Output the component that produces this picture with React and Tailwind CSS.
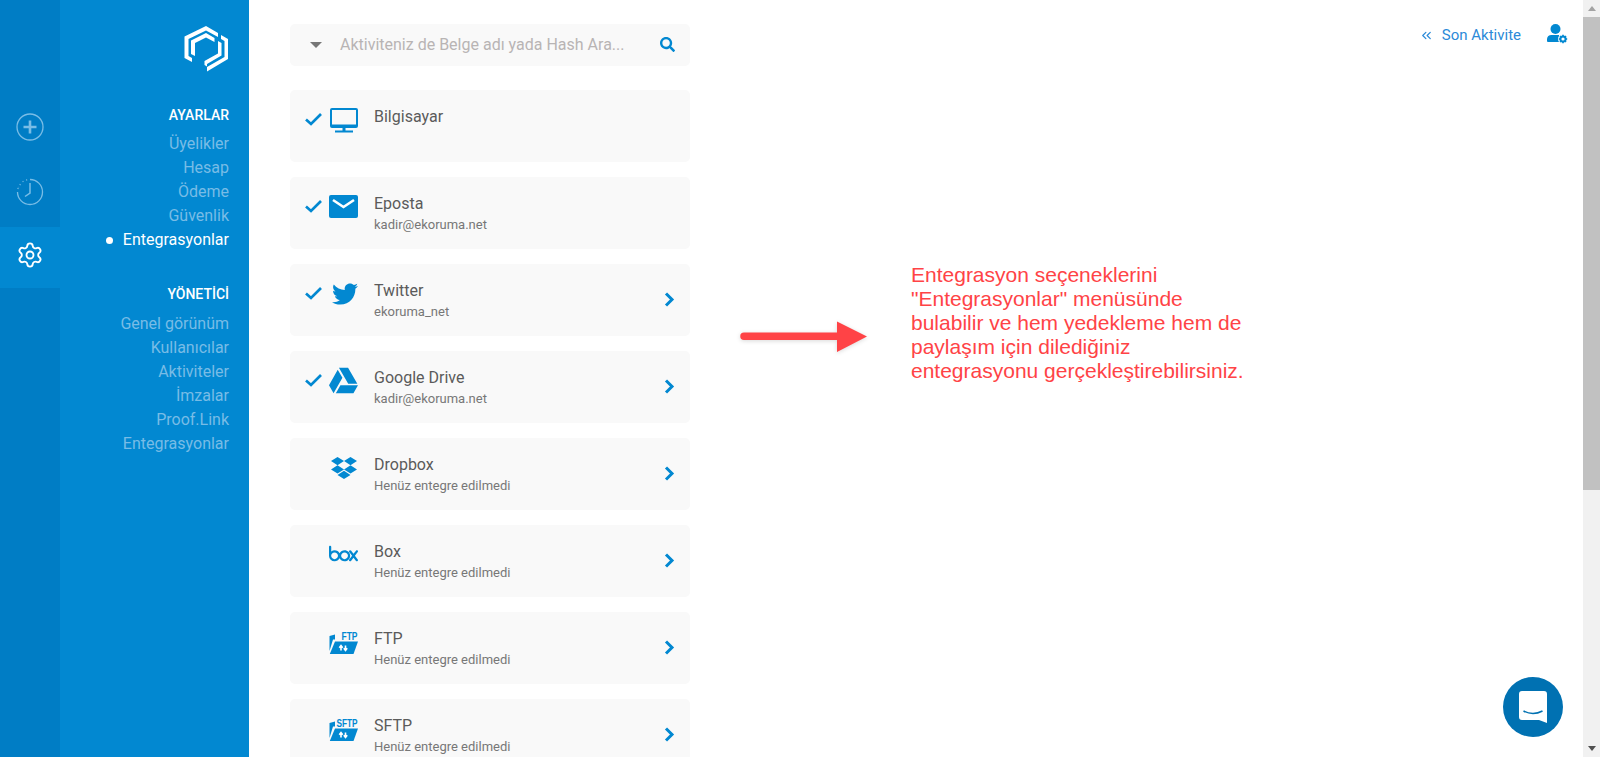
import { Settings, ChevronsLeft } from "lucide-react";
import { FaTwitter, FaDropbox, FaGoogleDrive, FaSearch } from "react-icons/fa";
import { SiBox } from "react-icons/si";

const settingsMenu = ["Üyelikler", "Hesap", "Ödeme", "Güvenlik"];
const adminMenu = ["Genel görünüm", "Kullanıcılar", "Aktiviteler", "İmzalar", "Proof.Link", "Entegrasyonlar"];

function Logo() {
  return (
    <svg width="46" height="46" viewBox="0 0 46 46" fill="#fff">
      <path d="M22 0 L34 7 L34 11 L22 4.5 L4.5 13 V30 L8 32 V36 L0.5 32 V10.5 Z" />
      <path d="M22 7 L30.5 12 V16 L22 11.5 L11 17 V30 L7 28 V14.5 Z" />
      <path d="M37 9 L44 13 V33 L23 45.5 V41 L40.5 31 V15 L37 13 Z" />
      <path d="M34 15 L37.5 17 V29.5 L23 38 V40.5 L20.5 39 V35 L34 27.5 Z" />
    </svg>
  );
}

function ClockIcon() {
  return (
    <svg width="28" height="28" viewBox="0 0 28 28" fill="none" stroke="#79bde6" strokeWidth="1.3">
      <path d="M14 1.5 A12.5 12.5 0 1 1 1.5 14" />
      <path d="M1.8 11 L2.6 9 M3.8 7 L5 5.4 M6.6 3.8 L8.2 2.8 M10.2 2 L11.8 1.7" strokeDasharray="1 1" />
      <path d="M14 5 V15 L9 18.5" strokeWidth="1.5" />
    </svg>
  );
}

function PlusIcon() {
  return (
    <svg width="28" height="28" viewBox="0 0 28 28" fill="none" stroke="#79bde6">
      <circle cx="14" cy="14" r="13" strokeWidth="1.3" />
      <path d="M14 7.5 V20.5 M7.5 14 H20.5" strokeWidth="2.6" />
    </svg>
  );
}

function MonitorIcon() {
  return (
    <svg width="28" height="25" viewBox="0 0 28 25" fill="#0288d1">
      <path fillRule="evenodd" d="M2 0 H26 A2 2 0 0 1 28 2 V18 A2 2 0 0 1 26 20 H2 A2 2 0 0 1 0 18 V2 A2 2 0 0 1 2 0 Z M2 2 V16.5 H26 V2 Z" />
      <rect x="12.5" y="20" width="3" height="3" />
      <rect x="5" y="22.5" width="18" height="2" />
    </svg>
  );
}

function MailIcon() {
  return (
    <svg width="29" height="23" viewBox="0 0 29 23">
      <rect width="29" height="23" rx="2" fill="#0288d1" />
      <path d="M4 5 L14.5 12 L25 5" fill="none" stroke="#fff" strokeWidth="2.6" />
    </svg>
  );
}

function CheckIcon() {
  return (
    <svg width="17" height="13" viewBox="0 0 17 13" fill="none" stroke="#0288d1" strokeWidth="2.7">
      <path d="M1 6.5 L6 11 L16 1" />
    </svg>
  );
}

function ChevronIcon() {
  return (
    <svg width="11" height="15" viewBox="0 0 11 15" fill="none" stroke="#0288d1" strokeWidth="3">
      <path d="M2 1.5 L8 7.5 L2 13.5" />
    </svg>
  );
}

function UserCogIcon() {
  return (
    <svg width="21" height="20" viewBox="0 0 21 20" className="ml-[26px] -mt-[2px]">
      <circle cx="8.5" cy="5" r="5" fill="#0288d1" />
      <path d="M0 17.5 V15 A4.5 4.5 0 0 1 4.5 11 H12 L12.5 17 V18 H1 Z" fill="#0288d1" />
      <circle cx="16" cy="15" r="5" fill="#fff" />
      <circle cx="16" cy="15" r="2.6" fill="none" stroke="#0288d1" strokeWidth="2" />
      <path d="M16 10.8 V12 M16 18 V19.2 M11.8 15 H13 M19 15 H20.2 M13 12 L13.9 12.9 M18.1 17.1 L19 18 M13 18 L13.9 17.1 M18.1 12.9 L19 12" stroke="#0288d1" strokeWidth="1.6" />
    </svg>
  );
}

function FolderIcon({ label }) {
  return (
    <svg width="29" height="24" viewBox="0 0 29 24" className="overflow-visible">
      <path d="M0.5 6 L6 4.5 V9.5 H4 L0.5 21 Z" fill="#0288d1" />
      <path d="M6 11.5 H29 L24.5 24 H0.8 Z" fill="#0288d1" />
      <text x="28.5" y="9.5" textAnchor="end" fontFamily="'Liberation Sans', sans-serif" fontWeight="700" fontSize="11" textLength={label.length > 3 ? 21 : 16} lengthAdjust="spacingAndGlyphs" fill="#0288d1">{label}</text>
      <path d="M12 20.5 V16 M10.3 17.8 L12 15.5 L13.7 17.8 M16.5 15.5 V20 M14.8 18.2 L16.5 20.5 L18.2 18.2" stroke="#fff" strokeWidth="1.6" fill="none" />
    </svg>
  );
}

function Card({ icon, title, sub, checked, arrow }) {
  return (
    <div className="h-[72px] mb-[15px] bg-[#f9f9f9] rounded-[5px] flex shrink-0">
      <div className="w-[39px] pl-[15px] pt-[23px] shrink-0">
        {checked && <CheckIcon />}
      </div>
      <div className="w-[29px] mr-[16px] pt-[18px] flex justify-center shrink-0">{icon}</div>
      <div className="flex-1 pt-[15px]">
        <div className="text-[16px] leading-[24px] text-[#5b5b5b]">{title}</div>
        {sub && <div className="text-[13px] leading-[19px] -mt-[1px] text-[#777777]">{sub}</div>}
      </div>
      {arrow && (
        <div className="w-[26px] pb-[2px] flex items-center shrink-0">
          <ChevronIcon />
        </div>
      )}
    </div>
  );
}

export default function App() {
  return (
    <div className="h-screen w-full flex overflow-hidden bg-white font-['Roboto',sans-serif] relative">
      {/* ikon menu */}
      <div className="w-[60px] bg-[#007dc5] pt-[94px] shrink-0">
        <div className="h-[65px] flex items-center justify-center"><PlusIcon /></div>
        <div className="h-[68px] pb-[3px] flex items-center justify-center"><ClockIcon /></div>
        <div className="h-[61px] pb-[6px] bg-[#0288d1] flex items-center justify-center">
          <Settings size={28} strokeWidth={1.6} className="text-white" />
        </div>
      </div>

      {/* menu */}
      <div className="w-[189px] bg-[#0288d1] shrink-0 pr-[20px] text-right">
        <div className="flex justify-end pt-[26px] -mr-[1px]"><Logo /></div>
        <div className="mt-[31px] text-[14px] leading-[24px] font-medium text-white">AYARLAR</div>
        <div className="mt-[5px] text-[16px] leading-[24px] text-[#78bce6]">
          {settingsMenu.map((item) => <div key={item}>{item}</div>)}
          <div className="text-white flex items-center justify-end">
            <span className="w-[7px] h-[7px] rounded-full bg-white mr-[10px]" />
            Entegrasyonlar
          </div>
        </div>
        <div className="mt-[30px] text-[14px] leading-[24px] font-medium text-white">YÖNETİCİ</div>
        <div className="mt-[6px] text-[16px] leading-[24px] text-[#78bce6]">
          {adminMenu.map((item) => <div key={item}>{item}</div>)}
        </div>
      </div>

      {/* liste */}
      <div className="w-[400px] ml-[41px] pt-[24px] shrink-0">
        <div className="h-[42px] mb-[24px] bg-[#f9f9f9] rounded-[5px] flex items-center">
          <span className="ml-[20px] mr-[18px] w-0 h-0 border-x-[6px] border-x-transparent border-t-[6px] border-t-[#777777]" />
          <span className="flex-1 text-[16px] text-[#b8b4b4]">Aktiviteniz de Belge adı yada Hash Ara...</span>
          <FaSearch className="text-[#0288d1] text-[15px] mr-[15px] -mt-[1px]" />
        </div>
        <Card icon={<MonitorIcon />} title="Bilgisayar" checked />
        <Card icon={<MailIcon />} title="Eposta" sub="kadir@ekoruma.net" checked />
        <Card icon={<FaTwitter className="text-[#0288d1] text-[26px] -mt-[1px] ml-[2px]" />} title="Twitter" sub="ekoruma_net" checked arrow />
        <Card icon={<FaGoogleDrive className="text-[#0288d1] text-[29px] -mt-[3px]" />} title="Google Drive" sub="kadir@ekoruma.net" checked arrow />
        <Card icon={<FaDropbox className="text-[#0288d1] text-[26px] -mt-[1px]" />} title="Dropbox" sub="Henüz entegre edilmedi" arrow />
        <Card icon={<SiBox className="text-[#0288d1] text-[29px] -mt-[4px]" />} title="Box" sub="Henüz entegre edilmedi" arrow />
        <Card icon={<FolderIcon label="FTP" />} title="FTP" sub="Henüz entegre edilmedi" arrow />
        <Card icon={<FolderIcon label="SFTP" />} title="SFTP" sub="Henüz entegre edilmedi" arrow />
      </div>

      {/* sag alan */}
      <div className="flex-1 min-w-0">
        <div className="flex justify-end items-center pt-[23px] pr-[15px] text-[#2b8ad8]">
          <ChevronsLeft size={15} strokeWidth={2} className="mr-[8px]" />
          <span className="text-[15px] leading-[24px]">Son Aktivite</span>
          <UserCogIcon />
        </div>
        <div className="flex mt-[216px] ml-[50px]">
          <svg width="127" height="34" viewBox="0 0 127 34" className="mt-[57px] shrink-0 drop-shadow-sm">
            <path d="M4 12.5 H97 V1.5 L127 16.5 L97 32 V20 H4 A3.7 3.7 0 0 1 4 12.5 Z" fill="#ff4346" />
          </svg>
          <div className="ml-[44px] w-[350px] font-['Liberation_Sans',sans-serif] text-[21px] leading-[24px] text-[#ff4346]">
            Entegrasyon seçeneklerini<br />
            "Entegrasyonlar" menüsünde<br />
            bulabilir ve hem yedekleme hem de<br />
            paylaşım için dilediğiniz<br />
            entegrasyonu gerçekleştirebilirsiniz.
          </div>
        </div>
      </div>

      {/* kaydirma cubugu */}
      <div className="w-[17px] bg-[#f1f1f1] shrink-0 flex flex-col items-center">
        <span className="mt-[6px] w-0 h-0 border-x-[4px] border-x-transparent border-b-[5px] border-b-[#a3a3a3]" />
        <div className="mt-[6px] w-full h-[473px] bg-[#c1c1c1]" />
        <span className="mt-auto mb-[6px] w-0 h-0 border-x-[4px] border-x-transparent border-t-[5px] border-t-[#505050]" />
      </div>

      {/* sohbet */}
      <div className="absolute left-[1503px] top-[677px] w-[60px] h-[60px] rounded-full bg-[#0071b2] flex items-center justify-center">
        <svg width="28" height="32" viewBox="0 0 28 32">
          <path d="M3 0 H25 A3 3 0 0 1 28 3 V32 L20 29 H3 A3 3 0 0 1 0 26 V3 A3 3 0 0 1 3 0 Z" fill="#fff" />
          <path d="M4.5 20 Q14 25 23.5 20" fill="none" stroke="#0071b2" strokeWidth="1.5" />
        </svg>
      </div>
    </div>
  );
}
